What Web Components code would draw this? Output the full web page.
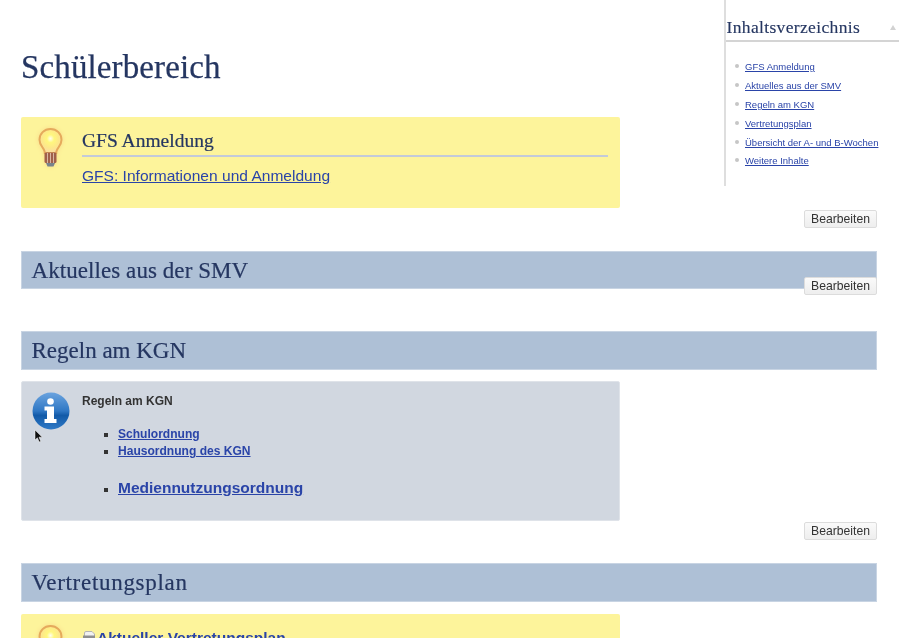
<!DOCTYPE html>
<html lang="de">
<head>
<meta charset="utf-8">
<title>Schülerbereich</title>
<style>
  html { overflow: hidden; }
  body { margin: 0; background: #fff; color: #333; font-family: "Liberation Sans", Arial, sans-serif; }
  main { display: block; padding: 0 23px 0 21px; height: 638px; overflow: hidden; filter: blur(.35px); }
  h1 { margin: 0; padding-top: 44px; height: 73px; font: 400 33px/46px "Liberation Serif", serif; color: #253661; letter-spacing: .13px; -webkit-text-stroke: .25px #253661; }
  a { color: #2a44a8; }
  .gfs-title { font: 400 19.5px/28px "Liberation Serif", serif; color: #253661; border-bottom: 2px solid #c3cad9; margin-right: 12px; -webkit-text-stroke: .2px #253661; }
  .gfs-link { display: block; font-size: 15.55px; line-height: 20px; margin-top: 9px; }
  .note { font-size: 12px; font-weight: bold; line-height: 16px; color: #333; }
  ul { margin: 0; padding: 0 0 0 36px; list-style: square; }
  li { font-size: 12.05px; font-weight: bold; line-height: 17px; }
  li::marker { font-size: 12.5px; color: #333; }
  li.big { font-size: 15.5px; line-height: 20px; margin-top: 18px; }
  .rules { padding-top: 17px; }
  .plan { font-size: 15.5px; font-weight: bold; line-height: 20px; color: #2a44a8; display: flex; align-items: flex-start; margin-top: 4px; }
  .plan svg { flex: none; margin-top: 2px; }
</style>
</head>
<body>
<main>
  <k-toc>
    <a href="#gfs">GFS Anmeldung</a>
    <a href="#smv">Aktuelles aus der SMV</a>
    <a href="#regeln">Regeln am KGN</a>
    <a href="#plan">Vertretungsplan</a>
    <a href="#wochen">Übersicht der A- und B-Wochen</a>
    <a href="#weitere">Weitere Inhalte</a>
  </k-toc>

  <h1>Schülerbereich</h1>

  <k-callout kind="tip" style="height:91px">
    <k-bulb slot="icon"></k-bulb>
    <div class="gfs-title">GFS Anmeldung</div>
    <a class="gfs-link" href="#gfs">GFS: Informationen und Anmeldung</a>
  </k-callout>
  <k-edit style="margin-top:2px"></k-edit>

  <k-bar style="margin-top:23px;height:38px;letter-spacing:.07px">Aktuelles aus der SMV</k-bar>
  <k-edit style="margin-top:-12px"></k-edit>

  <k-bar style="margin-top:36px">Regeln am KGN</k-bar>

  <k-callout kind="info" style="height:140px;margin-top:11px">
    <k-info-icon slot="icon"></k-info-icon>
    <div class="note">Regeln am KGN</div>
    <div class="rules">
      <ul>
        <li><a href="#schulordnung">Schulordnung</a></li>
        <li><a href="#hausordnung">Hausordnung des KGN</a></li>
        <li class="big"><a href="#medien">Mediennutzungsordnung</a></li>
      </ul>
    </div>
  </k-callout>
  <k-edit style="margin-top:1px"></k-edit>

  <k-bar style="margin-top:23px;letter-spacing:.7px">Vertretungsplan</k-bar>

  <k-callout kind="tip" style="height:91px;margin-top:12px">
    <k-bulb slot="icon"></k-bulb>
    <div class="plan">
      <svg width="15" height="15" viewBox="0 0 15 15" aria-hidden="true"><path d="M2.500 3q0-1.500 1.500-1.500h6l2.500 2.500v9h-10z" fill="#f2f2f2" stroke="#b5b5b5"/><rect x="1" y="5.500" width="12" height="5" fill="#8f8f8f"/></svg>
      <a href="#plan" style="color:inherit">Aktueller Vertretungsplan</a>
    </div>
  </k-callout>
</main>

<script>
class KToc extends HTMLElement {
  constructor() {
    super();
    this.attachShadow({ mode: 'open' });
    this.shadowRoot.innerHTML = `
      <style>
        :host {
          display: block;
          float: right;
          width: 173.5px;
          height: 186px;
          margin-right: -22px;
          border-left: 2px solid #dedede;
          font-family: "Liberation Sans", Arial, sans-serif;
        }
        .head {
          display: flex;
          justify-content: space-between;
          align-items: center;
          height: 26px;
          padding: 14px 3px 0 1px;
          border-bottom: 2px solid #d4d4d4;
        }
        .title {
          font: 400 17.5px/24px "Liberation Serif", serif;
          color: #253661;
          letter-spacing: .35px;
          -webkit-text-stroke: .15px #253661;
        }
        .arrow {
          width: 0;
          height: 0;
          border: 3px solid transparent;
          border-bottom: 5px solid #d2d2d2;
          border-top: 0;
        }
        .list {
          display: flex;
          flex-direction: column;
          gap: 5.9px;
          padding: 18px 0 0 19.5px;
        }
        ::slotted(a) {
          display: block;
          position: relative;
          font-size: 9.5px;
          line-height: 13px;
          color: #2a44a8;
        }
        ::slotted(a)::before {
          content: "";
          position: absolute;
          left: -10px;
          top: 4px;
          width: 4px;
          height: 4px;
          border-radius: 50%;
          background: #c6c6c6;
        }
      </style>
      <div class="head"><span class="title">Inhaltsverzeichnis</span><span class="arrow"></span></div>
      <div class="list"><slot></slot></div>
    `;
  }
}

class KCallout extends HTMLElement {
  constructor() {
    super();
    this.attachShadow({ mode: 'open' });
    this.shadowRoot.innerHTML = `
      <style>
        :host {
          display: block;
          width: 599px;
          box-sizing: border-box;
          border-radius: 2px;
          background: #fdf49b;
          overflow: hidden;
        }
        :host([kind="info"]) { background: #d1d7e0; border: 1px solid #dfe3e9; }
        .wrap { display: grid; grid-template-columns: 61px 1fr; height: 100%; }
        :host([kind="info"]) .wrap { grid-template-columns: 60px 1fr; }
        .text { padding-top: 10px; }
        :host([kind="info"]) .text { padding-top: 11px; }
      </style>
      <div class="wrap">
        <div class="icon"><slot name="icon"></slot></div>
        <div class="text"><slot></slot></div>
      </div>
    `;
  }
}

class KBar extends HTMLElement {
  constructor() {
    super();
    this.attachShadow({ mode: 'open' });
    this.shadowRoot.innerHTML = `
      <style>
        :host {
          display: block;
          height: 39px;
          box-sizing: border-box;
          padding-left: 9.5px;
          background: #aec0d6;
          border: 1px solid #c8d4e3;
          font: 400 23px/38px "Liberation Serif", serif;
          color: #253661;
          -webkit-text-stroke: .2px #253661;
        }
      </style>
      <slot></slot>
    `;
  }
}

class KEdit extends HTMLElement {
  constructor() {
    super();
    this.attachShadow({ mode: 'open' });
    this.shadowRoot.innerHTML = `
      <style>
        :host { display: flex; justify-content: flex-end; position: relative; }
        button {
          width: 73px;
          height: 18px;
          padding: 0;
          border: 1px solid #dcdcdc;
          border-radius: 2px;
          background: linear-gradient(#fafafa, #eeeeee);
          font: 12.2px/16px "Liberation Sans", Arial, sans-serif;
          color: #333;
        }
      </style>
      <button type="button">Bearbeiten</button>
    `;
  }
}

class KBulb extends HTMLElement {
  constructor() {
    super();
    this.attachShadow({ mode: 'open' });
    this.shadowRoot.innerHTML = `
      <style>
        :host { display: block; padding: 10px 0 0 15px; }
        svg { display: block; overflow: visible; filter: drop-shadow(0 0 2px #f9d98a); }
      </style>
      <svg width="28" height="41" viewBox="0 0 28 41" aria-hidden="true">
        <defs>
          <radialGradient id="glow" cx=".5" cy=".4" r=".55">
            <stop offset="0" stop-color="#fffef0"/>
            <stop offset=".3" stop-color="#fff77e"/>
            <stop offset=".7" stop-color="#fde88a"/>
            <stop offset="1" stop-color="#fbdf9c"/>
          </radialGradient>
        </defs>
        <path d="M14.500 2C8.200 2 3.500 6.700 3.500 12.700c0 4.700 2.800 7 4.300 9.800.8 1.500 1 2.800 1 3.500h11.400c0-.7.2-2 1-3.500 1.500-2.800 4.300-5.100 4.300-9.800C25.500 6.700 20.800 2 14.500 2z" fill="url(#glow)" stroke="#e5aa5c" stroke-width="2"/>
        <rect x="8.500" y="25.500" width="12" height="10.500" rx="1.500" fill="#a0604a"/>
        <path d="M11.500 26v10M14.500 26v10M17.500 26v10" stroke="#d8b7a2" stroke-width="1"/>
        <path d="M10 36h9l-1.500 3.500h-6z" fill="#77828c"/>
      </svg>
    `;
  }
}

class KInfoIcon extends HTMLElement {
  constructor() {
    super();
    this.attachShadow({ mode: 'open' });
    this.shadowRoot.innerHTML = `
      <style>
        :host { display: block; position: relative; padding: 10px 0 0 10px; }
        svg { display: block; }
        .cursor { position: absolute; left: 12px; top: 47px; }
      </style>
      <svg width="38" height="38" viewBox="0 0 38 38" aria-hidden="true">
        <defs>
          <linearGradient id="ball" x1="0" y1="0" x2="0" y2="1">
            <stop offset="0" stop-color="#6aa3df"/>
            <stop offset=".5" stop-color="#2f77c4"/>
            <stop offset=".62" stop-color="#125aa8"/>
            <stop offset="1" stop-color="#2f79c6"/>
          </linearGradient>
        </defs>
        <circle cx="19" cy="19" r="18.500" fill="url(#ball)"/>
        <circle cx="18.500" cy="9.500" r="3.300" fill="#fff"/>
        <path d="M12.500 14.500h9.500v12.500h2.500v4h-12v-4h2.500v-8.500h-2.500z" fill="#fff"/>
      </svg>
      <svg class="cursor" width="9" height="14" viewBox="0 0 9 14" aria-hidden="true">
        <path d="M1 1v10l2.400-2.200L5.200 13l1.600-.7L5 8.200h3.300z" fill="#111" stroke="#fff" stroke-width=".5"/>
      </svg>
    `;
  }
}

customElements.define('k-toc', KToc);
customElements.define('k-callout', KCallout);
customElements.define('k-bar', KBar);
customElements.define('k-edit', KEdit);
customElements.define('k-bulb', KBulb);
customElements.define('k-info-icon', KInfoIcon);
</script>
</body>
</html>
